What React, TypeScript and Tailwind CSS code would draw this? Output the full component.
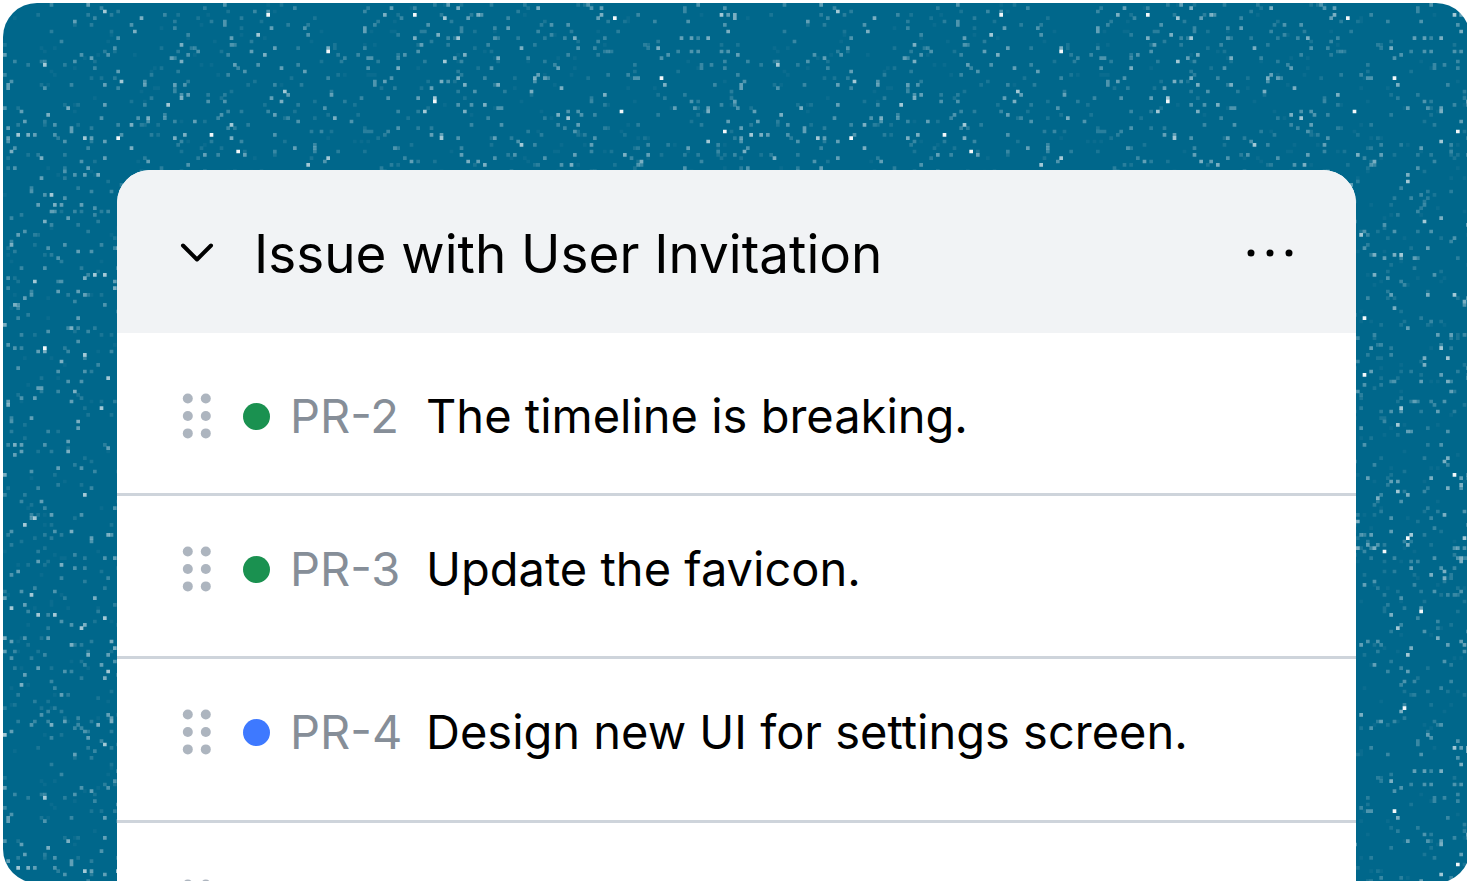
import React from "react";

type Issue = { id: string; title: string; done: boolean; space: string };

const issues: Issue[] = [
  { id: "PR-2", title: "The timeline is breaking.", done: true, space: "pt-[53px] pb-[47px]" },
  { id: "PR-3", title: "Update the favicon.", done: true, space: "pt-[43px] pb-[57px]" },
  { id: "PR-4", title: "Design new UI for settings screen.", done: false, space: "pt-[43px] pb-[58px]" },
];

const CELLS = 220;
const OPACITIES = [0.04, 0.1, 0.16, 0.22, 0.3, 0.38, 0.48, 0.64, 0.95];
const WEIGHTS = [0.17, 0.33, 0.49, 0.64, 0.77, 0.87, 0.945, 0.985, 1];

function buildSpeckles(): string[] {
  const paths = OPACITIES.map(() => "");
  let seed = 20731;
  const random = () => {
    seed = (seed + 0x6d2b79f5) | 0;
    let t = Math.imul(seed ^ (seed >>> 15), 1 | seed);
    t = (t + Math.imul(t ^ (t >>> 7), 61 | t)) ^ t;
    return ((t ^ (t >>> 14)) >>> 0) / 4294967296;
  };
  for (let y = 0; y < CELLS; y++) {
    for (let x = 0; x < CELLS; x++) {
      if (random() > 0.068) continue;
      const pick = random();
      const level = WEIGHTS.findIndex((w) => pick <= w);
      paths[level] += `M${x} ${y}h1.1v1.1h-1.1z`;
    }
  }
  return paths;
}

const speckles = buildSpeckles();

function Speckles() {
  return (
    <svg className="absolute inset-0 h-full w-full" aria-hidden="true">
      <defs>
        <g id="speckle-tile" transform="scale(3.33333)" fill="#fff">
          {speckles.map((d, i) => (
            <path key={i} d={d} fillOpacity={OPACITIES[i]} />
          ))}
        </g>
      </defs>
      {[0, 733, 1466].map((y) =>
        [0, 733, 1466, 2199].map((x) => <use key={`${x}-${y}`} href="#speckle-tile" x={x} y={y} />),
      )}
    </svg>
  );
}

function Grip() {
  return (
    <svg width="30" height="46" viewBox="0 0 30 46" fill="#adb5bf" className="shrink-0" aria-hidden="true">
      {[5.5, 23, 40.4].map((y) => (
        <React.Fragment key={y}>
          <circle cx="5.8" cy={y} r="5" />
          <circle cx="23.8" cy={y} r="5" />
        </React.Fragment>
      ))}
    </svg>
  );
}

export default function App() {
  return (
    <div className="h-screen overflow-hidden bg-white pt-[3px] pl-[3px] font-['Inter',sans-serif] text-black">
      <main className="relative -mr-[3px] h-[calc(100%+2px)] overflow-hidden rounded-[34px] bg-[#00678b] px-[114px] pt-[167px]">
        <Speckles />
        <section className="relative overflow-hidden rounded-t-[33px] bg-white">
          <header className="flex items-center bg-[#f1f3f5] px-[63px] pt-[52px] pb-[46px]">
            <button type="button" aria-label="Collapse" className="mb-1 flex shrink-0">
              <svg width="34" height="20" viewBox="0 0 34 20" fill="none" stroke="#000" strokeWidth="4" strokeLinecap="round" strokeLinejoin="round" aria-hidden="true">
                <path d="M3 2.5 17 16.5 31 2.5" />
              </svg>
            </button>
            <h1 className="ml-10 flex-1 text-[53px] leading-[65px]">Issue with User Invitation</h1>
            <button type="button" aria-label="More actions" className="mb-1 flex shrink-0">
              <svg width="46" height="8" viewBox="0 0 46 8" fill="#000" aria-hidden="true">
                <circle cx="4" cy="4" r="3.5" />
                <circle cx="23" cy="4" r="3.5" />
                <circle cx="42" cy="4" r="3.5" />
              </svg>
            </button>
          </header>
          <ul>
            {issues.map((issue) => (
              <li key={issue.id} className={`flex items-center border-b-[3px] border-[#ced4db] px-[65px] text-[47px] leading-[60px] ${issue.space}`}>
                <Grip />
                <span className={`ml-[31px] size-[27px] shrink-0 rounded-full ${issue.done ? "bg-[#1a9150]" : "bg-[#3e79ff]"}`} />
                <span className="ml-5 w-[136px] shrink-0 whitespace-nowrap text-[#868e98]">{issue.id}</span>
                <span className="whitespace-nowrap">{issue.title}</span>
              </li>
            ))}
            <li className="px-[65px] py-14">
              <Grip />
            </li>
          </ul>
        </section>
      </main>
    </div>
  );
}
